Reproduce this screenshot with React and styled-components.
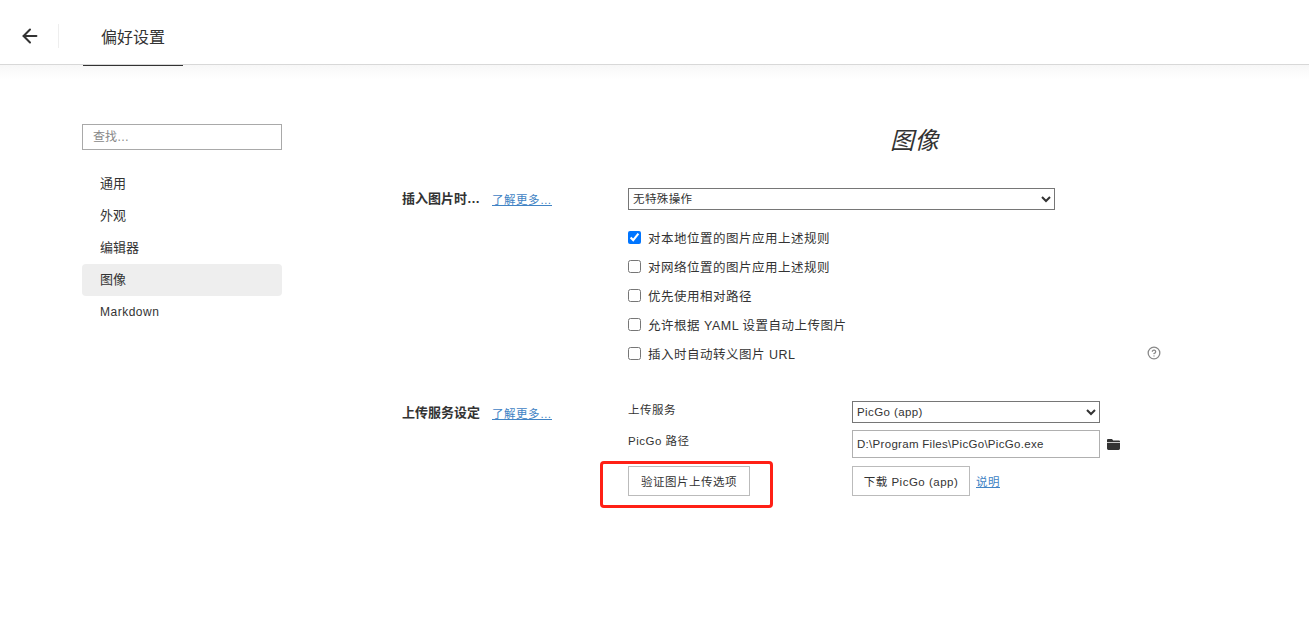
import React from 'react';
import styled, { createGlobalStyle } from 'styled-components';
import { ArrowLeft, CircleHelp } from 'lucide-react';

const FONT = `"Liberation Sans", "Noto Sans CJK SC", sans-serif`;

const GlobalStyle = createGlobalStyle`
  html, body {
    margin: 0;
    padding: 0;
    background: #fff;
    font-family: ${FONT};
    font-size: 12.5px;
    letter-spacing: 0.5px;
    color: #333;
  }
  * { box-sizing: border-box; }
`;

const Page = styled.div`
  width: 1309px;
  height: 621px;
  overflow: hidden;
`;

const Header = styled.header`
  height: 65px;
  display: flex;
  align-items: center;
  padding-top: 7px;
  border-bottom: 1px solid #d8d8d8;
  position: relative;
`;

const BackButton = styled.div`
  width: 59px;
  height: 24px;
  display: flex;
  align-items: center;
  padding-left: 19px;
  border-right: 1px solid #eee;
  color: #333;
`;

const HeaderTitle = styled.div`
  margin-left: 42px;
  font-size: 16px;
  letter-spacing: 0;
  color: #333;
`;

const HeaderMark = styled.div`
  position: absolute;
  left: 83px;
  bottom: -2px;
  width: 100px;
  height: 1px;
  background: #333;
`;

const Shade = styled.div`
  height: 14px;
  background: linear-gradient(#f7f7f7, #fff);
`;

const Body = styled.div`
  display: flex;
  padding: 45px 0 0 82px;
`;

const Sidebar = styled.aside`
  width: 200px;
  flex-shrink: 0;
`;

const Search = styled.input`
  display: block;
  width: 200px;
  height: 26px;
  padding: 0 10px;
  border: 1px solid #a9a9a9;
  font-family: ${FONT};
  font-size: 12px;
  outline: none;
  &::placeholder { color: #888; opacity: 1; }
`;

const NavList = styled.nav`
  margin-top: 18px;
`;

const NavItem = styled.div`
  height: 32px;
  line-height: ${p => (p.$latin ? '33px' : '31px')};
  padding-left: 18px;
  border-radius: 4px;
  font-size: ${p => (p.$latin ? '12px' : '13px')};
  letter-spacing: ${p => (p.$latin ? '0.5px' : '0')};
  background: ${p => (p.$active ? '#eee' : 'transparent')};
`;

const Main = styled.main`
  margin-left: 120px;
  width: 760px;
`;

const Title = styled.h1`
  margin: 0;
  height: 39px;
  line-height: 34px;
  padding-left: 488px;
  font-size: 24px;
  font-weight: 400;
  font-style: italic;
  letter-spacing: 0.5px;
  color: #333;
`;

const Section = styled.section`
  display: flex;
  margin-top: ${p => p.$top}px;
`;

const SectionHead = styled.div`
  width: 226px;
  flex-shrink: 0;
  display: flex;
  align-items: flex-start;
  height: 22px;
  padding-top: ${p => p.$pad || 0}px;
  line-height: 22px;
`;

const SectionLabel = styled.span`
  width: 90px;
  font-size: 13px;
  font-weight: 700;
  letter-spacing: 0;
  white-space: nowrap;
`;

const Link = styled.a`
  color: #4183c4;
  text-decoration: underline;
  font-size: 11.5px;
  white-space: nowrap;
`;

const HeadLink = styled(Link)`
  line-height: 24px;
`;

const SectionBody = styled.div`
  flex: 1;
  min-width: 0;
`;

const Select = styled.select`
  display: block;
  width: ${p => p.$w}px;
  height: 22px;
  padding: 0;
  background: #fff;
  border: 1px solid #767676;
  font-family: ${FONT};
  font-size: 11.5px;
  letter-spacing: 0.4px;
  color: #333;
  outline: none;
`;

const CheckList = styled.div`
  margin-top: 13px;
  position: relative;
`;

const CheckRow = styled.label`
  height: 29px;
  display: flex;
  align-items: center;
  gap: 7px;
`;

const Check = styled.input`
  width: 13px;
  height: 13px;
  margin: 0;
  accent-color: #0075ff;
`;

const HelpIcon = styled.div`
  position: absolute;
  bottom: 8px;
  left: 519px;
  color: #888;
  line-height: 0;
`;

const FormGrid = styled.div`
  display: grid;
  grid-template-columns: 224px 248px auto;
  grid-auto-rows: auto;
  align-items: center;
`;

const FieldLabel = styled.div`
  font-size: 11.5px;
  height: 18px;
  line-height: 18px;
  margin-bottom: ${p => p.$lift}px;
`;

const PathInput = styled.input`
  display: block;
  width: 248px;
  height: 28px;
  margin: 7px 0 8px;
  padding: 0 4px;
  border: 1px solid #b0b0b0;
  font-family: ${FONT};
  font-size: 11.5px;
  letter-spacing: 0.3px;
  color: #333;
  outline: none;
`;

const FolderIcon = styled.svg`
  display: block;
  margin-left: 7px;
`;

const ButtonCell = styled.div`
  position: relative;
  justify-self: start;
  line-height: 0;
`;

const Button = styled.button`
  height: 30px;
  width: ${p => p.$w}px;
  padding: 0;
  border: 1px solid #bbb;
  background: #fff;
  font-family: ${FONT};
  font-size: 11.5px;
  letter-spacing: 0.5px;
  color: #333;
`;

const Highlight = styled.div`
  position: absolute;
  left: -28px;
  top: -5px;
  width: 173px;
  height: 47px;
  border: 3px solid #ff2016;
  border-radius: 4px;
  pointer-events: none;
`;

const DownloadCell = styled.div`
  display: flex;
  align-items: center;
  gap: 6px;
`;

const navItems = ['通用', '外观', '编辑器', '图像', 'Markdown'];
const checks = [
  ['对本地位置的图片应用上述规则', true],
  ['对网络位置的图片应用上述规则', false],
  ['优先使用相对路径', false],
  ['允许根据 YAML 设置自动上传图片', false],
  ['插入时自动转义图片 URL', false],
];

export default function App() {
  return (
    <Page>
      <GlobalStyle />
      <Header>
        <BackButton>
          <ArrowLeft size={22} strokeWidth={2.2} />
        </BackButton>
        <HeaderTitle>偏好设置</HeaderTitle>
        <HeaderMark />
      </Header>
      <Shade />
      <Body>
        <Sidebar>
          <Search placeholder="查找…" />
          <NavList>
            {navItems.map(item => (
              <NavItem key={item} $active={item === '图像'} $latin={item === 'Markdown'}>{item}</NavItem>
            ))}
          </NavList>
        </Sidebar>
        <Main>
          <Title>图像</Title>
          <Section $top={25}>
            <SectionHead>
              <SectionLabel>插入图片时…</SectionLabel>
              <HeadLink>了解更多…</HeadLink>
            </SectionHead>
            <SectionBody>
              <Select $w={427} defaultValue="none">
                <option value="none">无特殊操作</option>
              </Select>
              <CheckList>
                {checks.map(([text, on]) => (
                  <CheckRow key={text}>
                    <Check type="checkbox" defaultChecked={on} />
                    {text}
                  </CheckRow>
                ))}
                <HelpIcon><CircleHelp size={14} strokeWidth={2.2} /></HelpIcon>
              </CheckList>
            </SectionBody>
          </Section>
          <Section $top={33}>
            <SectionHead $pad={1}>
              <SectionLabel>上传服务设定</SectionLabel>
              <HeadLink>了解更多…</HeadLink>
            </SectionHead>
            <SectionBody>
              <FormGrid>
                <FieldLabel $lift={4}>上传服务</FieldLabel>
                <Select $w={248} defaultValue="picgo">
                  <option value="picgo">PicGo (app)</option>
                </Select>
                <span />
                <FieldLabel $lift={7}>PicGo 路径</FieldLabel>
                <PathInput readOnly value="D:\Program Files\PicGo\PicGo.exe" />
                <FolderIcon width="13" height="11" viewBox="0 0 13 11">
                  <path fill="#333" d="M1 0h4l1.2 1.4H12a1 1 0 0 1 1 1V3H0V1a1 1 0 0 1 1-1zM0 3.8h13V9.600a1.400 1.400 0 0 1-1.400 1.400H1.400A1.400 1.400 0 0 1 0 9.600z" />
                </FolderIcon>
                <ButtonCell>
                  <Button $w={122}>验证图片上传选项</Button>
                  <Highlight />
                </ButtonCell>
                <DownloadCell>
                  <Button $w={118}>下载 PicGo (app)</Button>
                  <Link>说明</Link>
                </DownloadCell>
                <span />
              </FormGrid>
            </SectionBody>
          </Section>
        </Main>
      </Body>
    </Page>
  );
}
